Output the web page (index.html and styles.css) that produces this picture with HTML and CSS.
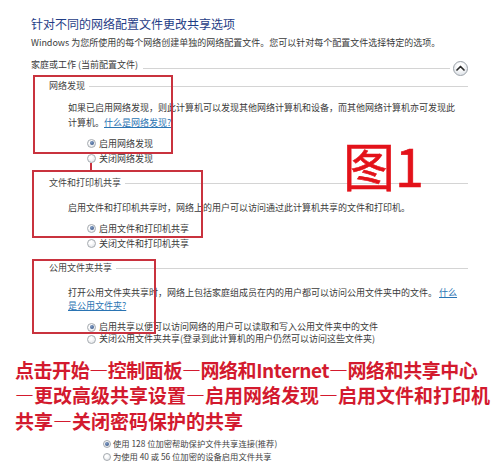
FILE: index.html
```html
<!DOCTYPE html>
<html lang="zh-CN">
<head>
<meta charset="utf-8">
<title>高级共享设置</title>
<link rel="stylesheet" href="styles.css">
</head>
<body>
<div class="page">
  <div class="title">针对不同的网络配置文件更改共享选项</div>
  <div class="desc">Windows 为您所使用的每个网络创建单独的网络配置文件。您可以针对每个配置文件选择特定的选项。</div>

  <div class="profile-head">
    <span class="label">家庭或工作 (当前配置文件)</span>
    <span class="rule"></span>
    <span class="collapse"><svg width="9" height="6" viewBox="0 0 9 6"><path d="M1 5 L4.5 1.5 L8 5" fill="none" stroke="#2b2b2b" stroke-width="1.7" stroke-linecap="round" stroke-linejoin="round"/></svg></span>
  </div>

  <section class="group g1">
    <div class="group-head"><span class="label">网络发现</span><span class="rule"></span></div>
    <p class="para">如果已启用网络发现，则此计算机可以发现其他网络计算机和设备，而其他网络计算机亦可发现此<br>计算机。<a class="link">什么是网络发现?</a></p>
    <div class="options">
      <div class="opt"><span class="radio on"></span>启用网络发现</div>
      <div class="opt"><span class="radio"></span>关闭网络发现</div>
    </div>
  </section>

  <section class="group g2">
    <div class="group-head"><span class="label">文件和打印机共享</span><span class="rule"></span></div>
    <p class="para">启用文件和打印机共享时，网络上的用户可以访问通过此计算机共享的文件和打印机。</p>
    <div class="options">
      <div class="opt"><span class="radio on"></span>启用文件和打印机共享</div>
      <div class="opt"><span class="radio"></span>关闭文件和打印机共享</div>
    </div>
  </section>

  <section class="group g3">
    <div class="group-head"><span class="label">公用文件夹共享</span><span class="rule"></span></div>
    <p class="para tight">打开公用文件夹共享时，网络上包括家庭组成员在内的用户都可以访问公用文件夹中的文件。 <a class="link">什么<br>是公用文件夹?</a></p>
    <div class="options tight">
      <div class="opt"><span class="radio on"></span>启用共享以便可以访问网络的用户可以读取和写入公用文件夹中的文件</div>
      <div class="opt"><span class="radio"></span>关闭公用文件夹共享(登录到此计算机的用户仍然可以访问这些文件夹)</div>
    </div>
  </section>

  <div class="instructions"><span class="first-line">点击开始—控制面板—网络和Internet—网络和共享中心</span><br>—更改高级共享设置—启用网络发现—启用文件和打印机<br>共享—关闭密码保护的共享</div>

  <div class="enc-options">
    <div class="opt small"><span class="radio on"></span>使用 128 位加密帮助保护文件共享连接(推荐)</div>
    <div class="opt small"><span class="radio"></span>为使用 40 或 56 位加密的设备启用文件共享</div>
  </div>

  <div class="mark box1"></div>
  <div class="mark box2"></div>
  <div class="mark box3"></div>
  <div class="tick"></div>
  <div class="fig-label">图1</div>
</div>
</body>
</html>
```
FILE: styles.css
```css
body {
  margin: 0;
  background: #ffffff;
  font-family: "Noto Sans CJK SC", "Noto Sans", sans-serif;
  color: #3a3a3a;
}

.page {
  position: relative;
  width: 500px;
  height: 472px;
  box-sizing: border-box;
  padding: 16px 32px 0 31px;
  overflow: hidden;
}

.title {
  height: 16px;
  font-size: 12px;
  line-height: 16px;
  color: #1f3d86;
  white-space: nowrap;
}

.desc {
  margin-top: 4px;
  height: 14px;
  font-size: 9px;
  line-height: 14px;
  white-space: nowrap;
}

.profile-head {
  margin-top: 8px;
  height: 14px;
  display: flex;
  align-items: center;
  font-size: 9px;
}

.label {
  line-height: 14px;
  white-space: nowrap;
}

.rule {
  flex: 1;
  height: 1px;
  background: #d4d4d4;
  margin-left: 4px;
}

.profile-head .rule {
  margin: 6px 3px 0 5px;
}

.collapse {
  width: 15px;
  height: 15px;
  margin-top: 6px;
  box-sizing: border-box;
  border-radius: 50%;
  border: 1px solid #9ba2a9;
  background: radial-gradient(circle at 50% 35%, #ffffff 25%, #d3d9e0 100%);
  display: flex;
  align-items: center;
  justify-content: center;
}

.group {
  padding-left: 18px;
}

.group-head {
  height: 14px;
  display: flex;
  align-items: center;
  font-size: 9px;
  color: #444;
}

.g1 { margin-top: 7px; }
.g2 { margin-top: 10.5px; }
.g3 { margin-top: 10.5px; }

.para {
  margin: 6.5px 0 0 19px;
  font-size: 9px;
  line-height: 15px;
  white-space: nowrap;
}

.g2 .para { margin-top: 9.5px; }

.para.tight {
  margin-top: 10.5px;
  line-height: 13px;
}

.link {
  color: #2a74b3;
  text-decoration: underline;
}

.options {
  margin: 6px 0 0 38px;
}

.options.tight {
  margin-top: 9.5px;
}

.opt {
  height: 15px;
  line-height: 15px;
  display: flex;
  align-items: center;
  font-size: 9px;
  white-space: nowrap;
}

.options.tight .opt {
  height: 12px;
  line-height: 12px;
}

.radio {
  position: relative;
  width: 9px;
  height: 9px;
  margin-right: 3px;
  flex-shrink: 0;
  box-sizing: border-box;
  border-radius: 50%;
  border: 1px solid #a6abb0;
  background: radial-gradient(circle at 40% 35%, #ffffff 20%, #dadee3 100%);
}

.radio.on::after {
  content: "";
  position: absolute;
  left: 1.5px;
  top: 1.5px;
  width: 4px;
  height: 4px;
  border-radius: 50%;
  background: radial-gradient(circle at 40% 35%, #7f9bc4, #2c4a7c);
}

.instructions {
  margin: 11.5px 0 0 -16px;
  font-size: 19px;
  line-height: 25.5px;
  font-weight: 700;
  color: #d31a2e;
  white-space: nowrap;
}

.first-line {
  letter-spacing: -0.45px;
}

.enc-options {
  margin-top: 4px;
  padding-left: 72px;
}

.opt.small {
  height: 13px;
  line-height: 13px;
  font-size: 8.3px;
  color: #444;
}

.opt.small .radio {
  width: 8px;
  height: 8px;
  margin-right: 2px;
}

.opt.small .radio.on::after {
  left: 1px;
  top: 1px;
  width: 4px;
  height: 4px;
}

.mark {
  position: absolute;
  box-sizing: border-box;
  border: 2px solid #c9323e;
}

.box1 { left: 33px; top: 75px; width: 140px; height: 79px; }
.box2 { left: 32px; top: 170px; width: 171px; height: 68px; }
.box3 { left: 32px; top: 259px; width: 124px; height: 75px; }

.tick {
  position: absolute;
  left: 90px;
  top: 163px;
  width: 2px;
  height: 7px;
  background: #c9323e;
}

.fig-label {
  position: absolute;
  left: 343px;
  top: 139px;
  font-size: 52px;
  line-height: 52px;
  font-weight: 400;
  color: #e3121a;
  -webkit-text-stroke: 0.6px #e3121a;
  white-space: nowrap;
}
```
